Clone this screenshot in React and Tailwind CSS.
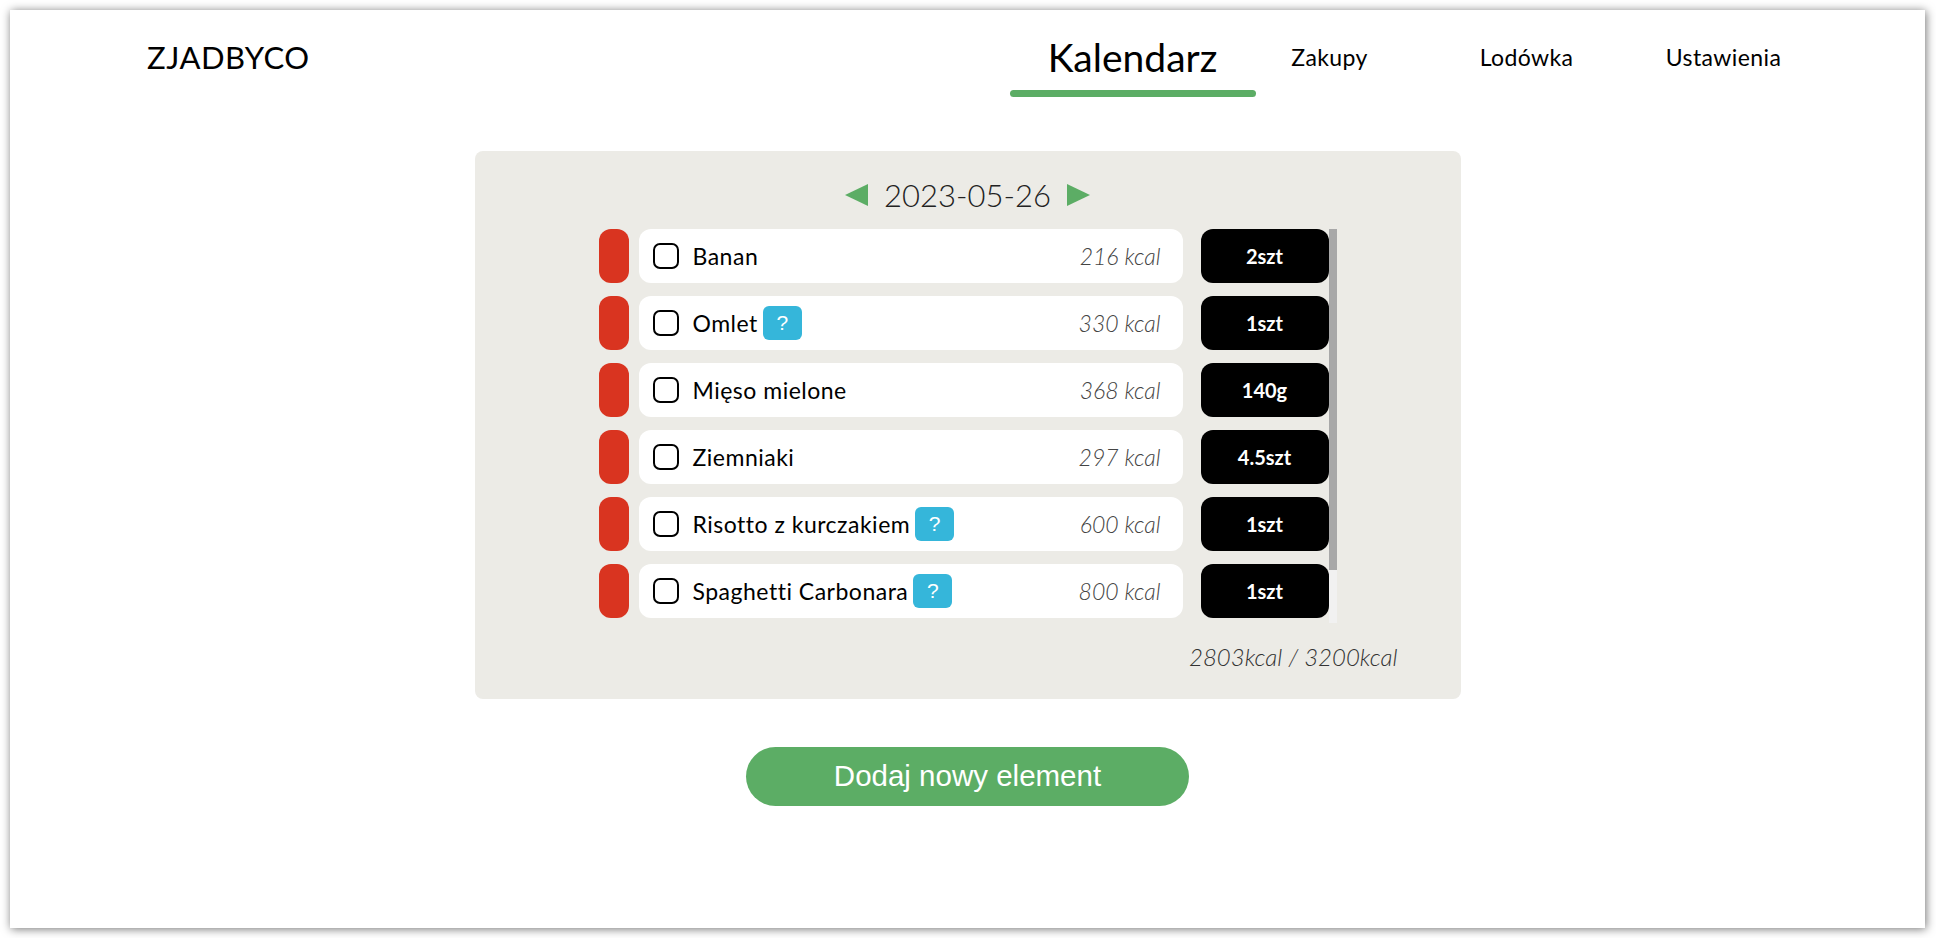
import React from "react";

const items = [
  { name: "Banan", kcal: 216, qty: "2szt", info: false },
  { name: "Omlet", kcal: 330, qty: "1szt", info: true },
  { name: "Mięso mielone", kcal: 368, qty: "140g", info: false },
  { name: "Ziemniaki", kcal: 297, qty: "4.5szt", info: false },
  { name: "Risotto z kurczakiem", kcal: 600, qty: "1szt", info: true },
  { name: "Spaghetti Carbonara", kcal: 800, qty: "1szt", info: true },
];

const navLinks = ["Zakupy", "Lodówka", "Ustawienia"];

const Arrow = ({ dir }) => (
  <svg width="23" height="22" viewBox="0 0 23 22" className="shrink-0">
    {dir === "left" ? (
      <polygon points="0,11 23,0 23,22" fill="#5cad65" />
    ) : (
      <polygon points="23,11 0,0 0,22" fill="#5cad65" />
    )}
  </svg>
);

const FoodRow = ({ item }) => (
  <div className="flex items-stretch h-[54px] shrink-0">
    <div className="w-[30px] rounded-[12px] bg-[#d93420]" />
    <div className="ml-[10px] w-[544px] bg-white rounded-[12px] flex items-center pl-[14px] pr-[22px]">
      <div className="w-[26px] h-[26px] rounded-[7px] border-2 border-black shrink-0" />
      <span className="ml-[14px] text-[23px] tracking-[0.5px] text-black">{item.name}</span>
      {item.info && (
        <span className="ml-[5px] w-[39px] h-[34px] rounded-[6px] bg-[#35b6da] text-white flex items-center justify-center text-[21px] font-['Liberation_Sans',sans-serif]">
          ?
        </span>
      )}
      <span className="ml-auto text-[23px] font-light italic text-[#444]">
        {item.kcal} kcal
      </span>
    </div>
    <div className="ml-[18px] w-[128px] bg-black rounded-[12px] flex items-center justify-center text-white text-[20px] font-bold">
      {item.qty}
    </div>
  </div>
);

export default function App() {
  return (
    <div className="w-[1936px] h-[938px] bg-white pt-[10px] pl-[10px] font-['Lato',sans-serif] overflow-hidden">
      <div className="w-[1915px] h-[918px] bg-white shadow-[1px_1px_9px_rgba(0,0,0,0.55)] flex flex-col items-center">
        {/* Header */}
        <header className="w-full flex items-start pt-[25px] pl-[137px] pr-[103px]">
          <div className="text-[31px] leading-[44px] text-black tracking-[0.5px]">ZJADBYCO</div>
          <nav className="ml-auto flex items-start">
            <div className="w-[197px] flex flex-col items-center">
              <span className="text-[39px] leading-[44px] text-black">Kalendarz</span>
              <div className="mt-[11px] w-[246px] h-[7px] rounded-full bg-[#5cad65] shrink-0" />
            </div>
            {navLinks.map((link) => (
              <div key={link} className="w-[197px] flex justify-center">
                <span className="text-[23px] leading-[44px] tracking-[0.4px] text-black">{link}</span>
              </div>
            ))}
          </nav>
        </header>

        {/* Day card */}
        <section className="mt-[54px] w-[986px] bg-[#ecebe6] rounded-[8px] pt-[26px] pb-[27px] flex flex-col items-center">
          <div className="flex items-center h-[36px] gap-[16px]">
            <Arrow dir="left" />
            <span className="text-[31px] leading-[36px] font-light text-[#222]">2023-05-26</span>
            <Arrow dir="right" />
          </div>

          <div className="mt-[16px] flex h-[394px]">
            <div className="w-[730px] flex flex-col gap-[13px]">
              {items.map((item) => (
                <FoodRow key={item.name} item={item} />
              ))}
            </div>
            {/* scrollbar */}
            <div className="w-[8px] h-full bg-[#f1f1f1]">
              <div className="h-[341px] bg-[#a8a8a8]" />
            </div>
          </div>

          <div className="mt-[19px] w-full flex justify-end pr-[63px]">
            <span className="text-[24px] leading-[30px] font-light italic text-[#333]">
              2803kcal / 3200kcal
            </span>
          </div>
        </section>

        <button className="mt-[48px] w-[443px] h-[59px] rounded-full bg-[#5cad65] text-white text-[29.5px] font-['Liberation_Sans',Arial,sans-serif]">
          Dodaj nowy element
        </button>
      </div>
    </div>
  );
}
